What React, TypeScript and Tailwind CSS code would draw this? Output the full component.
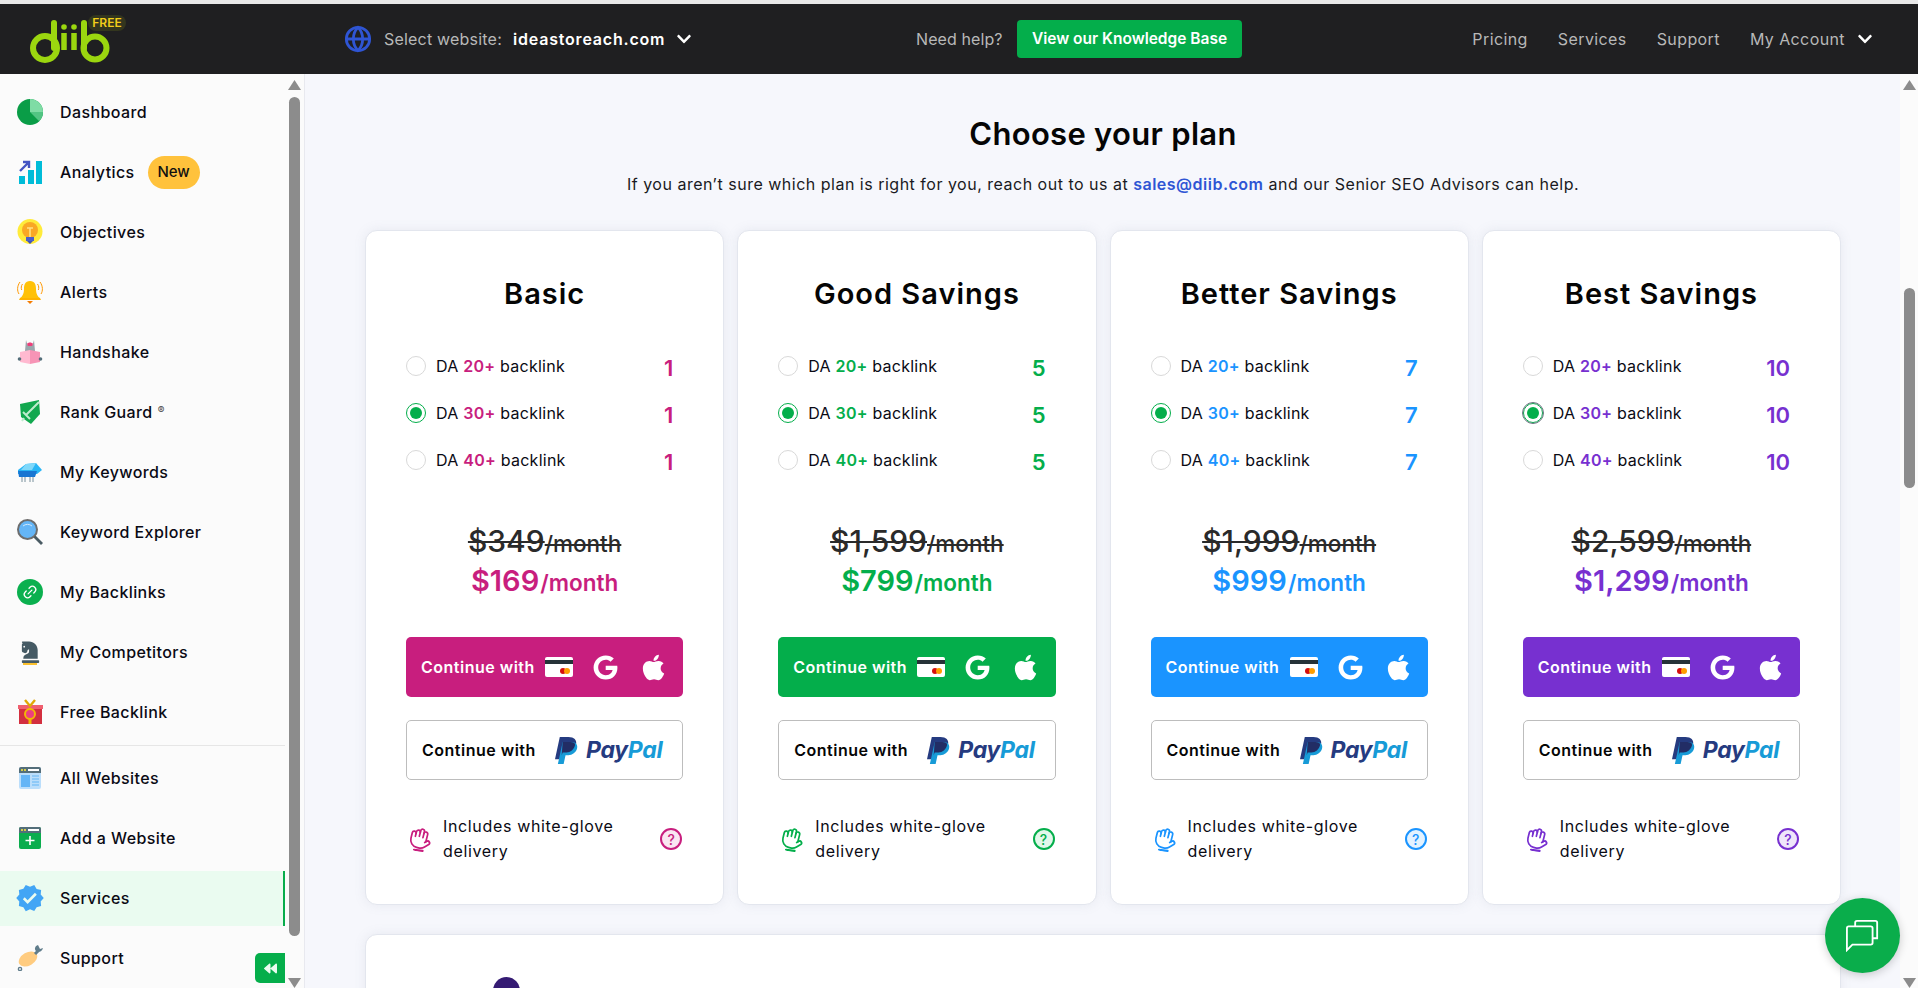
import React from "react";
import { FaApple, FaBackward, FaChessKnight, FaChevronDown, FaGoogle } from "react-icons/fa";
import { MdVerified } from "react-icons/md";
import { Globe, Link2 } from "lucide-react";

const I = ({ children }: { children: React.ReactNode }) => (
  <svg viewBox="0 0 26 26" className="w-[26px] h-[26px] shrink-0">{children}</svg>
);

const icons: Record<string, React.ReactNode> = {
  dash: (
    <I>
      <circle cx="13" cy="13" r="13" fill="#0a9d47" />
      <path d="M13 0a13 13 0 0 1 13 13H13z" fill="#7fdca5" />
      <path d="M13 13h13a13 13 0 0 1-3.800 9.200z" fill="#52c583" />
    </I>
  ),
  analytics: (
    <I>
      <rect x="2" y="17" width="6" height="8" fill="#00bcd8" />
      <rect x="11" y="11" width="6" height="14" fill="#00bcd8" />
      <rect x="19" y="2" width="6" height="23" fill="#00bcd8" />
      <path d="M3 12l8-8M6 3h6v6" stroke="#4454c3" strokeWidth="2.400" fill="none" />
    </I>
  ),
  obj: (
    <I>
      <circle cx="13" cy="12.500" r="12.500" fill="#ffeb3b" />
      <circle cx="13" cy="11" r="8" fill="#f9a825" />
      <path d="M10 9h6M13 9v9" stroke="#ffe082" strokeWidth="1.600" />
      <rect x="9" y="18" width="8" height="4" fill="#4b5fc9" />
      <path d="M10 22h6l-3 3z" fill="#3f51b5" />
    </I>
  ),
  alert: (
    <I>
      <path d="M13 2c-5 0-6 4-6 8 0 5-2 8-4 9v1.500h20V19c-2-1-4-4-4-9 0-4-1-8-6-8z" fill="#ffc107" />
      <path d="M3 19h20l1 2H2z" fill="#ffb300" />
      <path d="M10 22h6l-3 3z" fill="#f57c00" />
      <path d="M3 3C0 7 0 12 2 15M23 3c3 4 3 9 1 12" stroke="#ff9800" strokeWidth="1" fill="none" />
      <path d="M5.500 5c-1.500 2-1.500 4-.8 6M20.500 5c1.500 2 1.500 4 .8 6" stroke="#ff9800" strokeWidth="1" fill="none" />
    </I>
  ),
  hand: (
    <I>
      <path d="M9 1l1.500 5h5L17 1l1 11H8z" fill="#9ba7ad" />
      <path d="M10 5c1-2 5-2 6 0l-1 2h-4z" fill="#ec407a" />
      <path d="M3 13l10-2v14L3 23z" fill="#ffb9d0" />
      <path d="M23 13l-10-2v14l10-2z" fill="#f794b6" />
      <circle cx="2.500" cy="20" r="1.800" fill="#546e7a" />
      <circle cx="23.500" cy="20" r="1.800" fill="#546e7a" />
    </I>
  ),
  guard: (
    <I>
      <path d="M3 5l19-4 1 14-9 10-10-7z" fill="#12a84f" />
      <path d="M22 3L9 16M6 13l7 7M7 19l-2 3" stroke="#bdeccd" strokeWidth="2" fill="none" />
    </I>
  ),
  kw: (
    <I>
      <path d="M1 11l8-6 10-1 6 7-5 4H1z" fill="#29b6f6" />
      <path d="M1 12h19l-2 6H2z" fill="#1976d2" />
      <path d="M9 5l10-1-4 7H4z" fill="#7fd8fa" />
      <path d="M5 18v5M8 18v5M13 18v5M16 18v5" stroke="#78909c" strokeWidth="1" />
    </I>
  ),
  explore: (
    <I>
      <circle cx="10.500" cy="10.500" r="9.500" fill="#64b5f6" stroke="#6d6d6d" strokeWidth="2" />
      <path d="M17.500 17.500L25 25" stroke="#4a5b63" strokeWidth="2.800" />
      <path d="M6 7a7 7 0 0 1 9 0" stroke="#cfe8fc" strokeWidth="1" fill="none" />
    </I>
  ),
  links: (
    <div className="w-[26px] h-[26px] rounded-full bg-[#0bb04f] flex items-center justify-center shrink-0">
      <Link2 size={16} color="#fff" className="-rotate-45" />
    </div>
  ),
  knight: (
    <div className="w-[26px] h-[26px] flex flex-col items-center justify-end shrink-0">
      <FaChessKnight size={23} color="#455a64" />
      <div className="w-[14px] h-[2px] bg-[#fbc02d]" />
    </div>
  ),
  gift: (
    <I>
      <rect x="2" y="9" width="23" height="16" fill="#d32f3f" />
      <rect x="1" y="6" width="25" height="4" fill="#ef5f6f" />
      <rect x="11.500" y="9" width="3" height="16" fill="#f2b705" />
      <path d="M8 1l5 6 5-6" stroke="#e0a806" strokeWidth="2.400" fill="none" />
      <circle cx="13" cy="15" r="5" fill="#ec3f7f" stroke="#f2b705" strokeWidth="2" />
    </I>
  ),
  sites: (
    <I>
      <rect x="2" y="2" width="22" height="22" rx="2" fill="#bbdefb" />
      <path d="M2 8V4a2 2 0 0 1 2-2h18a2 2 0 0 1 2 2v4z" fill="#546e7a" />
      <circle cx="5" cy="5" r="1" fill="#ffeb3b" />
      <circle cx="8" cy="5" r="1" fill="#ffeb3b" />
      <rect x="11" y="4" width="11" height="2" fill="#fff" />
      <rect x="4" y="10" width="9" height="12" fill="#64b5f6" />
      <path d="M15 11h7M15 14h7M15 17h7M15 20h7" stroke="#64b5f6" strokeWidth="1.200" />
    </I>
  ),
  add: (
    <I>
      <rect x="2" y="2" width="22" height="22" rx="2" fill="#0bad4e" />
      <path d="M2 8V4a2 2 0 0 1 2-2h18a2 2 0 0 1 2 2v4z" fill="#546e7a" />
      <circle cx="5" cy="5" r="1" fill="#ffeb3b" />
      <circle cx="8" cy="5" r="1" fill="#ffeb3b" />
      <rect x="11" y="4" width="11" height="2" fill="#fff" />
      <path d="M13 11v9M8.500 15.500h9" stroke="#fff" strokeWidth="1.600" />
    </I>
  ),
  serv: (
    <div className="w-[26px] h-[26px] flex items-center justify-center shrink-0">
      <MdVerified size={30} color="#42a5f5" className="shrink-0" />
    </div>
  ),
  sup: (
    <I>
      <ellipse cx="11" cy="14" rx="10" ry="6.500" transform="rotate(-30 11 14)" fill="#ffcc80" />
      <path d="M18 9l3-3" stroke="#607d8b" strokeWidth="3" />
      <path d="M21 0c-3 1-4 4-2 6 2 2 6 1 7-3l-3 1-1-2z" fill="#607d8b" />
      <circle cx="3" cy="24" r="1.600" fill="none" stroke="#607d8b" strokeWidth="1.400" />
    </I>
  ),
};

const nav = [
  ["dash", "Dashboard"],
  ["analytics", "Analytics"],
  ["obj", "Objectives"],
  ["alert", "Alerts"],
  ["hand", "Handshake"],
  ["guard", "Rank Guard"],
  ["kw", "My Keywords"],
  ["explore", "Keyword Explorer"],
  ["links", "My Backlinks"],
  ["knight", "My Competitors"],
  ["gift", "Free Backlink"],
];
const nav2 = [
  ["sites", "All Websites"],
  ["add", "Add a Website"],
  ["serv", "Services"],
  ["sup", "Support"],
];

function NavRow({ icon, label }: { icon: string; label: string }) {
  const active = label === "Services";
  return (
    <div className="h-[60px] flex items-center shrink-0">
      <div
        className={`h-[55px] w-full flex items-center pl-[17px] gap-[17px] border-r-2 ${
          active ? "bg-[#eafbf0] border-[#08ac4c]" : "border-transparent"
        }`}
      >
        {icons[icon]}
        <span className="-mt-[1px] text-[16px] font-medium text-[#0a0a14] tracking-[0.4px]">{label}</span>
        {label === "Analytics" && (
          <span className="-ml-[4px] h-[33px] w-[52px] rounded-full bg-[#ffc23c] flex items-center justify-center text-[15px] font-medium text-[#111]">
            New
          </span>
        )}
        {label === "Rank Guard" && <span className="-ml-[12px] -mt-[4px] text-[10px] text-[#444]">®</span>}
      </div>
    </div>
  );
}

function Tri({ down }: { down?: boolean }) {
  return (
    <svg viewBox="0 0 13 10" className="w-[13px] h-[10px] shrink-0">
      <path d={down ? "M0 0h13L6.500 10z" : "M6.500 0L13 10H0z"} fill="#8c8c8c" />
    </svg>
  );
}

const plans = [
  { name: "Basic", n: "1", old: "$349", now: "$169", c: "#c81e7e", text: "text-[#c81e7e]", bg: "bg-[#c81e7e]", tint: "bg-[#fae6f2]", border: "border-[#c81e7e]" },
  { name: "Good Savings", n: "5", old: "$1,599", now: "$799", c: "#04ae4b", text: "text-[#04ae4b]", bg: "bg-[#04ae4b]", tint: "bg-[#e3f7eb]", border: "border-[#04ae4b]" },
  { name: "Better Savings", n: "7", old: "$1,999", now: "$999", c: "#1a94ff", text: "text-[#1a94ff]", bg: "bg-[#1a94ff]", tint: "bg-[#e3f2ff]", border: "border-[#1a94ff]" },
  { name: "Best Savings", n: "10", old: "$2,599", now: "$1,299", c: "#7730d0", text: "text-[#7730d0]", bg: "bg-[#7730d0]", tint: "bg-[#efe6fa]", border: "border-[#7730d0]" },
];

function CardIcon() {
  return (
    <svg viewBox="0 0 28 20" className="w-[28px] h-[20px] shrink-0">
      <rect width="28" height="20" rx="2" fill="#fff" />
      <rect y="3" width="28" height="4" fill="#263238" />
      <circle cx="18" cy="14" r="3" fill="#d50f0f" />
      <circle cx="22" cy="14" r="3" fill="#ff9e00" />
    </svg>
  );
}

function Glove({ c }: { c: string }) {
  return (
    <svg viewBox="0 0 24 26" className="w-[23px] h-[25px] ml-[3px] rotate-[14deg] shrink-0" fill="none" stroke={c} strokeWidth="1.800" strokeLinecap="round" strokeLinejoin="round">
      <g transform="translate(24 0) scale(-1 1)">
        <path d="M18 11V6a2 2 0 0 0-4 0" />
        <path d="M14 10V4a2 2 0 0 0-4 0v2" />
        <path d="M10 10.500V6a2 2 0 0 0-4 0v8" />
        <path d="M18 8a2 2 0 1 1 4 0v6a8 8 0 0 1-8 8h-2c-2.800 0-4.500-.86-6-2.340l-3.600-3.600a2 2 0 0 1 2.830-2.820L7 15" />
      </g>
      <path d="M8 25l9-1" strokeWidth="2.200" />
    </svg>
  );
}

function PayPal() {
  return (
    <div className="flex items-center gap-[8px]">
      <svg viewBox="0 0 24 28" className="w-[23px] h-[27px] shrink-0">
        <path d="M5 0h9c6 0 9 3 8 8s-5 8-10 8H8l-2 7H0z" fill="#253b80" />
        <path d="M8 5h9c5 0 7 3 6 7s-5 7-9 7h-3l-2 9H3z" fill="#179bd7" />
        <path d="M8 5h8c3 0 5 1 5 3-1 5-5 8-9 8H8l-1 3z" fill="#222d65" />
      </svg>
      <span className="text-[23px] font-bold italic tracking-[-0.3px] leading-none">
        <span className="text-[#253b80]">Pay</span>
        <span className="text-[#179bd7]">Pal</span>
      </span>
    </div>
  );
}

function Plan({ p, idx }: { p: (typeof plans)[number]; idx: number }) {
  return (
    <div className="flex-1 h-[675px] bg-white rounded-[12px] border border-[#e3e6ee] shadow-[0_0_12px_rgba(120,130,160,0.12)] px-[40px] pt-[43px] flex flex-col">
      <h2 className="h-[40px] leading-[40px] text-center text-[29px] font-semibold tracking-[1px] text-[#050505]">{p.name}</h2>
      <div className="mt-[28px] flex flex-col">
        {["20+", "30+", "40+"].map((da) => {
          const on = da === "30+";
          return (
            <div key={da} className="h-[47px] flex items-center">
              {on ? (
                <span
                  className={`w-[20px] h-[20px] rounded-full border border-[#04ae4b] flex items-center justify-center shrink-0 ${
                    idx === 3 ? "outline-1 outline-[#6b7280]" : ""
                  }`}
                >
                  <span className="w-[12px] h-[12px] rounded-full bg-[#04ae4b]" />
                </span>
              ) : (
                <span className="w-[20px] h-[20px] rounded-full border border-[#d9d9d9] shrink-0" />
              )}
              <span className="ml-[10px] text-[16px] tracking-[0.25px] text-[#0a0a14]">
                DA <span className={`font-semibold ${p.text}`}>{da}</span> backlink
              </span>
              <span className={`ml-auto mr-[10px] mt-[5px] text-[22px] font-semibold ${p.text}`}>{p.n}</span>
            </div>
          );
        })}
      </div>
      <div className="mt-[38px] h-[40px] flex items-baseline justify-center line-through text-[#2a2a2a] decoration-[2px]">
        <span className="text-[30px] font-medium leading-[40px]">{p.old}</span>
        <span className="text-[22.500px] font-medium leading-[40px]">/month</span>
      </div>
      <div className={`h-[40px] flex items-baseline justify-center ${p.text}`}>
        <span className="text-[29px] font-semibold leading-[40px] mr-[1px]">{p.now}</span>
        <span className="text-[22.500px] font-semibold leading-[40px]">/month</span>
      </div>
      <div className={`mt-[36px] h-[60px] rounded-[5px] ${p.bg} flex items-center pl-[15px] text-white`}>
        <span className="w-[124px] shrink-0 text-[16px] font-semibold tracking-[0.5px] whitespace-nowrap">Continue with</span>
        <CardIcon />
        <FaGoogle size={25} color="#fff" className="ml-[20px] shrink-0" />
        <FaApple size={29} color="#fff" className="ml-[21px] shrink-0" />
      </div>
      <div className="mt-[23px] h-[60px] rounded-[5px] border border-[#bdbdbd] flex items-center pl-[15px]">
        <span className="w-[133px] shrink-0 text-[16px] font-semibold tracking-[0.5px] whitespace-nowrap text-[#050505]">Continue with</span>
        <PayPal />
      </div>
      <div className="mt-[34px] flex items-center">
        <Glove c={p.c} />
        <span className="ml-[11px] w-[200px] text-[16px] tracking-[0.65px] leading-[25px] text-[#0a0a14]">Includes white-glove delivery</span>
        <span
          className={`ml-auto mr-[1px] w-[22px] h-[22px] rounded-full border-2 ${p.border} ${p.tint} ${p.text} flex items-center justify-center text-[14px] font-medium`}
        >
          ?
        </span>
      </div>
    </div>
  );
}

export default function App() {
  return (
    <div className="h-screen w-full overflow-hidden flex flex-col bg-[#f6f7fc] [font-family:'Inter',sans-serif] relative">
      <div className="h-[4px] bg-[#e8e8e8] shrink-0" />
      <header className="h-[70px] shrink-0 bg-[#1f1f21] flex items-center relative">
        <div className="w-[344px] shrink-0 pl-[30px] relative h-full">
          <svg viewBox="0 0 80 44" className="w-[80px] h-[44px] mt-[16px]">
            <g fill="none" stroke="#9bd60f" strokeWidth="6">
              <circle cx="15" cy="28" r="12" />
              <path d="M24 28V3" strokeLinecap="round" />
              <path d="M34 13v17M44 13v17" strokeWidth="5.500" />
              <circle cx="65" cy="28" r="11.500" />
              <path d="M54 28V3" strokeLinecap="round" />
            </g>
            <circle cx="34" cy="7" r="2.800" fill="#9bd60f" />
            <circle cx="44" cy="7" r="2.800" fill="#9bd60f" />
          </svg>
          <span className="absolute left-[88px] top-[11px] h-[16px] w-[38px] rounded-full bg-[#33361e] text-[#f3cf1a] text-[12px] font-semibold leading-[16px] text-center">
            FREE
          </span>
        </div>
        <div className="w-[572px] shrink-0 flex items-center">
          <Globe size={28} color="#2f55d4" strokeWidth={2.400} className="shrink-0" />
          <span className="ml-[12px] w-[129px] text-[16px] tracking-[0.2px] text-[#b8b8b8] whitespace-nowrap">Select website:</span>
          <span className="text-[16px] font-semibold tracking-[0.8px] text-white">ideastoreach.com</span>
          <FaChevronDown size={16} color="#fff" className="ml-[11px]" />
        </div>
        <span className="w-[101px] shrink-0 text-[16px] tracking-[0.1px] text-[#b8b8b8] whitespace-nowrap">Need help?</span>
        <span className="h-[38px] w-[225px] rounded-[4px] bg-[#04ae4b] text-white text-[15.500px] font-semibold flex items-center justify-center">
          View our Knowledge Base
        </span>
        <div className="ml-auto pr-[45px] flex items-center text-[16px] tracking-[0.4px] text-[#b8b8b8] gap-[30px]">
          <span>Pricing</span>
          <span>Services</span>
          <span>Support</span>
          <span className="flex items-center gap-[12px]">
            My Account <FaChevronDown size={16} color="#fff" />
          </span>
        </div>
      </header>

      <div className="flex-1 flex min-h-0">
        <aside className="w-[305px] shrink-0 bg-[#fbfbfb] border-r border-[#e8e9ef] flex relative">
          <div className="w-[285px] shrink-0 pt-[8px] flex flex-col overflow-hidden">
            {nav.map(([i, l]) => (
              <NavRow key={l} icon={i} label={l} />
            ))}
            <div className="h-px bg-[#e6e6e6] mt-[3px] mb-[2px] shrink-0" />
            {nav2.map(([i, l]) => (
              <NavRow key={l} icon={i} label={l} />
            ))}
          </div>
          <div className="flex-1 flex flex-col items-center pt-[6px] pr-[1px]">
            <Tri />
            <div className="mt-[7px] w-[11px] h-[839px] rounded-full bg-[#8c8c8c]" />
            <div className="mt-auto">
              <Tri down />
            </div>
          </div>
          <div className="absolute left-[255px] top-[879px] w-[30px] h-[30px] rounded-l-[5px] bg-[#05ae4b] flex items-center justify-center">
            <FaBackward size={13} color="#eafbf0" />
          </div>
        </aside>

        <main className="flex-1 min-w-0 overflow-hidden pl-[60px] pr-[59px] pt-[40px]">
          <h1 className="h-[40px] leading-[40px] text-center text-[31px] font-semibold tracking-[0.3px] text-[#050505]">Choose your plan</h1>
          <p className="mt-[20px] h-[20px] leading-[20px] text-center text-[16px] tracking-[0.5px] text-[#1a1a22] whitespace-nowrap">
            If you aren’t sure which plan is right for you, reach out to us at{" "}
            <span className="font-semibold text-[#2f55d4]">sales@diib.com</span> and our Senior SEO Advisors can help.
          </p>
          <div className="mt-[36px] flex gap-[13px]">
            {plans.map((p, i) => (
              <Plan key={p.name} p={p} idx={i} />
            ))}
          </div>
          <div className="mt-[29px] h-[300px] bg-white rounded-[12px] border border-[#e3e6ee] shadow-[0_0_12px_rgba(120,130,160,0.12)] pt-[42px] pl-[127px]">
            <div className="w-[27px] h-[27px] rounded-full bg-[#351b73]" />
          </div>
        </main>

        <div className="w-[18px] shrink-0 bg-[#fbfbfb] flex flex-col items-center pt-[6px] relative">
          <Tri />
          <div className="mt-[198px] w-[11px] h-[200px] rounded-full bg-[#8c8c8c]" />
          <div className="mt-auto">
            <Tri down />
          </div>
        </div>
      </div>

      <button className="absolute left-[1825px] top-[898px] w-[75px] h-[75px] rounded-full bg-[#0aad4b] shadow-[0_2px_10px_rgba(0,0,0,0.2)] flex items-center justify-center">
        <svg viewBox="0 0 38 36" className="w-[35px] h-[33px]" fill="none" stroke="#fff" strokeWidth="2">
          <path d="M2 34V10a2 2 0 0 1 2-2h24a2 2 0 0 1 2 2v16a2 2 0 0 1-2 2H8z" />
          <path d="M11 8V4a2 2 0 0 1 2-2h20a2 2 0 0 1 2 2v17h-5" />
        </svg>
      </button>
    </div>
  );
}
